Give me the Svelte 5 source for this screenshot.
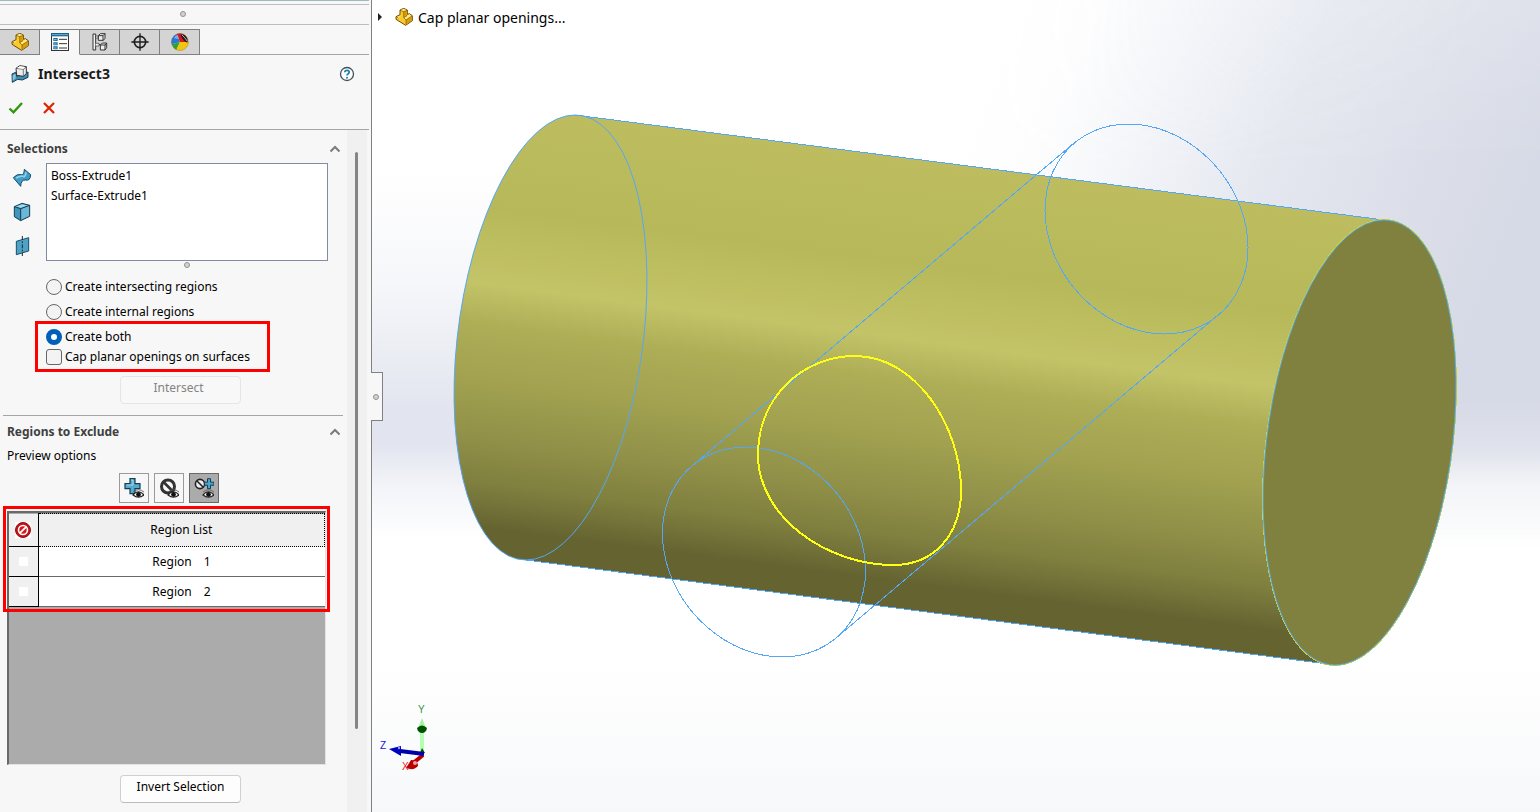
<script>
  const tabs = ['Feature tree', 'Properties', 'Configurations', 'Dimensions', 'Appearance'];
  const modes = ['Create intersecting regions', 'Create internal regions'];
  const regions = [1, 2];
  const previews = ['Show included regions', 'Show excluded regions', 'Show both'];
  let activeTab = $state(1);
  let activePreview = $state(2);
  let mode = $state('Create both');
  let cap = $state(false);
</script>

{#snippet part()}
  <svg class="ic18" viewBox="0 0 54 54" aria-hidden="true">
    <path d="M15 6 26 1 37 6V19L43 17 52 23V38L32 52 3 34V26L15 20Z" fill="#f8cb2a" stroke="#6e4a08" stroke-width="3" stroke-linejoin="round" />
    <path d="M26 11 36 7V23L27 28ZM33 37 51 25V37L33 50Z" fill="#d79c10" />
    <path d="M17 6 26 3 35 6 26 10ZM37 23 43 19 49 23 33 34 28 30ZM6 27 14 23V28L10 30Z" fill="#ffe98c" />
    <path d="M15 7 26 11 37 7M26 11V29L36 23M26 29 33 36 51 24M33 36V50M5 27 10 30" fill="none" stroke="#7c5708" stroke-width="2" />
  </svg>
{/snippet}

{#snippet eye()}
  <path d="M9 17Q14.500 10.500 20 17Q14.500 21.500 9 17Z" fill="#fff" stroke="#222" stroke-width="1.200" />
  <circle cx="14.500" cy="16.500" r="2.400" fill="#111" />
  <path d="M9 14Q14.500 9.500 20 14" fill="none" stroke="#555" stroke-width=".8" />
{/snippet}

{#snippet chevron()}
  <svg class="chev" viewBox="0 0 12 8" aria-hidden="true"><path d="M1.500 6.500 6 2 10.500 6.500" fill="none" stroke="#7b7b7b" stroke-width="2" /></svg>
{/snippet}

<main>
  <aside>
    <div class="topline"></div>
    <div class="grip"><i class="dot"></i></div>
    <nav>
      {#each tabs as name, i}
        <button class="tab" class:on={activeTab === i} aria-label={name} onclick={() => (activeTab = i)}>
          {#if i === 0}
            {@render part()}
          {:else if i === 1}
            <svg class="ic18" viewBox="0 0 54 54"><rect x="1.500" y="1.500" width="51" height="51" fill="#fff" stroke="#333" stroke-width="3" /><rect x="0" y="0" width="54" height="10" fill="#17648c" /><path d="M3 5H51" stroke="#6db4d5" stroke-width="3" /><path d="M7 15h13v9H7zM7 28h13v9H7zM7 40h13v9H7z" fill="#1a6d96" /><path d="M9 20h8M9 33h8M9 45h8" stroke="#8cc8e2" stroke-width="3" /><path d="M24 19H48M24 32H48M24 45H48" stroke="#333" stroke-width="3" /></svg>
          {:else if i === 2}
            <svg class="ic18" viewBox="0 0 54 54"><path d="M6 3h8v48H6zM14 12h10M14 35h15" fill="#f4f4f4" stroke="#333" stroke-width="3" /><path d="M15 9h7v6h-7M14 31h10v8H14" fill="#f4f4f4" stroke="#333" stroke-width="2" /><path d="m22 8 6-6h14v14l-5 6H22zM28 36l6-6h13v14l-5 7H28z" fill="#eee" stroke="#333" stroke-width="3" stroke-linejoin="round" /><path d="M22 8h14v14M36 8l6-6M28 36h14v15M42 36l5-6" fill="none" stroke="#333" stroke-width="3" /></svg>
          {:else if i === 3}
            <svg class="ic18" viewBox="0 0 54 54"><circle cx="27" cy="27" r="17" fill="none" stroke="#1c1c1c" stroke-width="5" /><path d="M27 1V53M1 27H53" stroke="#1c1c1c" stroke-width="4" /></svg>
          {:else}
            <svg class="ic18" viewBox="0 0 54 54"><circle cx="27" cy="27" r="26" fill="#e8dfcf" /><path d="M27 27 17 3A26 26 0 0 0 2 34Z" fill="#2778d4" /><path d="M27 27 17 3Q30-2 42 6L52 27Z" fill="#d81820" /><path d="M27 27 2 34Q6 46 16 51Z" fill="#2fa233" /><path d="M27 27 16 51Q24 55 34 52 51 46 53 27Z" fill="#f2c511" /><path d="M28 5Q44 3 50 18L49 29Q34 22 28 5Z" fill="#211b1b" /><path d="M33 6Q42 14 49 25" stroke="#b9b0ac" stroke-width="3" fill="none" /><path d="M9 16Q13 7 20 6L24 18Z" fill="#98c8fb" opacity=".7" /><circle cx="27" cy="27" r="25.500" fill="none" stroke="#79622e" /></svg>
          {/if}
        </button>
      {/each}
    </nav>
    <header>
      <div class="title">
        <svg class="ic18" viewBox="0 0 54 54" aria-hidden="true"><path d="M3 27 14 22 17 34 51 21V37L34 45 20 43 4 52Z" fill="#3d8db3" stroke="#123f58" stroke-width="3" stroke-linejoin="round" /><path d="M5 31 14 26V40L5 47Z" fill="#8cc4dc" /><path d="M15 10 26 2 46 5V26L37 34 17 31Z" fill="#ececee" stroke="#333" stroke-width="3" stroke-linejoin="round" /><path d="M15 10 37 13V33M37 13 46 6" fill="none" stroke="#444" stroke-width="2" /><path d="M18 9 27 4 42 6 36 11Z" fill="#fff" /></svg>
        <h1>Intersect3</h1>
        <button class="bare" aria-label="Help"><svg width="16" height="16" viewBox="0 0 16 16"><circle cx="8" cy="8" r="6.500" fill="#fff" stroke="#44515a" stroke-width="1.300" /><path d="M5.800 6.200Q5.900 4.300 8 4.300 10.200 4.300 10.200 6.100 10.200 7.200 9 7.900 8 8.500 8 9.600" fill="none" stroke="#1d7eae" stroke-width="1.700" /><circle cx="8" cy="11.700" r="1" fill="#1d7eae" /></svg></button>
      </div>
      <div class="confirm">
        <button class="bare" aria-label="OK"><svg width="16" height="14" viewBox="0 0 16 14"><path d="M1.500 7.500 5.500 11.300 14 2" fill="none" stroke="#34960c" stroke-width="2.400" /></svg></button>
        <button class="bare" aria-label="Cancel"><svg width="14" height="14" viewBox="0 0 14 14"><path d="M2 2 12 12M12 2 2 12" fill="none" stroke="#de2200" stroke-width="2.200" /></svg></button>
      </div>
    </header>
    <div class="body">
      <div class="content">
        <section>
          <div class="head"><h2>Selections</h2><button class="bare" aria-label="Collapse selections">{@render chevron()}</button></div>
          <div class="select">
            <div class="filters">
              <svg width="20" height="20" viewBox="0 0 60 60" aria-hidden="true"><path d="M4 29Q16 16 29 20 36 22 37 4L56 20Q55 40 40 36 27 35 26 55Z" fill="#3e9cc6" stroke="#144b68" stroke-width="3" stroke-linejoin="round" /><path d="M12 30Q28 21 36 26 43 22 41 12" fill="none" stroke="#8fd0ea" stroke-width="5" /></svg>
              <svg width="20" height="20" viewBox="0 0 60 60" aria-hidden="true"><path d="M7 14 30 4 53 10V43L26 56 7 44Z" fill="#3f95bb" stroke="#143f56" stroke-width="3" stroke-linejoin="round" /><path d="M10 14 30 7 49 11 26 18Z" fill="#a2d8ec" /><path d="M27 21 51 12V41L27 53Z" fill="#6cb7d6" /><path d="M7 14 26 20V55M26 20 53 10" fill="none" stroke="#143f56" stroke-width="3" /></svg>
              <svg width="20" height="20" viewBox="0 0 60 60" aria-hidden="true"><path d="M13 16 50 5V45L13 56Z" fill="#4fa2c5" stroke="#17506c" stroke-width="3" /><path d="M31 0V60" stroke="#182a33" stroke-width="3" stroke-dasharray="12 4 5 4" /></svg>
            </div>
            <ul><li>Boss-Extrude1</li><li>Surface-Extrude1</li></ul>
          </div>
          <div class="resize"><i class="dot"></i></div>
          <div class="options">
            {#each modes as m}
              <label><input type="radio" name="mode" value={m} bind:group={mode} />{m}</label>
            {/each}
            <div class="marked">
              <label><input type="radio" name="mode" value="Create both" bind:group={mode} />Create both</label>
              <label><input type="checkbox" bind:checked={cap} />Cap planar openings on surfaces</label>
            </div>
          </div>
          <button class="push" disabled>Intersect</button>
        </section>
        <hr />
        <section>
          <div class="head"><h2>Regions to Exclude</h2><button class="bare" aria-label="Collapse regions">{@render chevron()}</button></div>
          <p>Preview options</p>
          <div class="previews">
            {#each previews as name, i}
              <button class:on={activePreview === i} aria-label={name} onclick={() => (activePreview = i)}>
                <svg width="20" height="20" viewBox="0 0 20 20">
                  {#if i === 0}
                    <path d="M6 .7h5v5h5v5h-5v5H6v-5H1v-5h5z" fill="#56aacd" stroke="#123e57" stroke-width="1.200" />
                    <path d="M7 2h2v5H2.500" fill="none" stroke="#a5d8ec" />
                  {:else if i === 1}
                    <circle cx="9" cy="8.500" r="6.500" fill="none" stroke="#333" stroke-width="3" /><path d="M4.500 4 14 13.500" stroke="#333" stroke-width="2.600" />
                  {:else}
                    <circle cx="6" cy="6" r="4.600" fill="#eee" stroke="#222" stroke-width="1.600" /><path d="M3 3 9 9" stroke="#222" stroke-width="1.600" />
                    <path d="M13.500.7h3v3.500H20v3h-3.500v3.500h-3V7.200H10.500v-3h3z" fill="#4aa5cd" stroke="#123e57" />
                  {/if}
                  {@render eye()}
                </svg>
              </button>
            {/each}
          </div>
          <div class="list">
            <table>
              <thead>
                <tr>
                  <th class="mark"><svg width="16" height="16" viewBox="0 0 16 16" role="img" aria-label="Exclude"><rect width="16" height="16" fill="#fff" /><circle cx="8" cy="8" r="7.500" fill="#c80f14" stroke="#8c1215" /><circle cx="8" cy="8" r="4.500" fill="#d61a1e" stroke="#fff" stroke-width="1.600" /><path d="M4.800 11.200 11.200 4.800" stroke="#fff" stroke-width="1.800" /></svg></th>
                  <th class="name">Region List</th>
                </tr>
              </thead>
              <tbody>
                {#each regions as n}
                  <tr>
                    <td class="mark"><input type="checkbox" aria-label={`Exclude region ${n}`} /></td>
                    <td class="name">Region <span>{n}</span></td>
                  </tr>
                {/each}
              </tbody>
            </table>
          </div>
          <button class="push invert">Invert Selection</button>
        </section>
      </div>
      <div class="scroll"><i></i></div>
    </div>
  </aside>

  <div class="view">
    <svg class="scene" viewBox="372 0 1168 812" preserveAspectRatio="xMidYMid slice" role="img" aria-label="Cylinder model">
      <defs>
        <linearGradient id="side" gradientUnits="userSpaceOnUse" x1="575" y1="115" x2="517" y2="559">
          <stop offset="0" stop-color="#bdbd60" /><stop offset=".1" stop-color="#babb5c" /><stop offset=".23" stop-color="#b7b859" /><stop offset=".31" stop-color="#bdbe5f" /><stop offset=".4" stop-color="#c3c368" /><stop offset=".49" stop-color="#aeae57" /><stop offset=".62" stop-color="#a1a150" /><stop offset=".75" stop-color="#8f8f48" /><stop offset=".84" stop-color="#80803f" /><stop offset=".89" stop-color="#737239" /><stop offset=".94" stop-color="#656330" /><stop offset="1" stop-color="#656330" />
        </linearGradient>
        <linearGradient id="sky" gradientUnits="userSpaceOnUse" x1="990" y1="60" x2="1500" y2="260">
          <stop offset="0" stop-color="#dfe3ee" stop-opacity="0" /><stop offset=".15" stop-color="#dfe3ee" stop-opacity=".08" /><stop offset=".3" stop-color="#dfe3ee" stop-opacity=".35" /><stop offset=".55" stop-color="#dfe3ec" stop-opacity=".85" /><stop offset=".8" stop-color="#dcdfe9" /><stop offset="1" stop-color="#d6dae6" />
        </linearGradient>
        <linearGradient id="fade" x1="0" y1="0" x2="0" y2="1">
          <stop offset="0" stop-color="#fff" stop-opacity=".85" /><stop offset=".3" stop-color="#fff" /><stop offset=".73" stop-color="#fff" /><stop offset=".82" stop-color="#fff" stop-opacity=".75" /><stop offset=".88" stop-color="#fff" stop-opacity=".3" /><stop offset="1" stop-color="#fff" stop-opacity="0" />
        </linearGradient>
        <mask id="horizon"><rect x="900" y="0" width="640" height="550" fill="url(#fade)" /></mask>
        <linearGradient id="west" x1="0" y1="0" x2="0" y2="1">
          <stop offset="0" stop-color="#e2e5ef" stop-opacity="0" /><stop offset=".3" stop-color="#e2e5ef" stop-opacity=".3" /><stop offset=".65" stop-color="#e2e5ef" /><stop offset=".74" stop-color="#e2e5ef" /><stop offset=".86" stop-color="#e2e5ef" stop-opacity=".4" /><stop offset="1" stop-color="#e2e5ef" stop-opacity="0" />
        </linearGradient>
        <linearGradient id="floor" x1="0" y1="0" x2="0" y2="1"><stop offset="0" stop-color="#fff" /><stop offset="1" stop-color="#f7f8fa" /></linearGradient>
      </defs>
      <rect x="372" width="1168" height="812" fill="#fff" />
      <rect x="372" y="660" width="1168" height="152" fill="url(#floor)" />
      <rect x="372" y="170" width="180" height="370" fill="url(#west)" />
      <rect x="900" y="0" width="640" height="550" fill="url(#sky)" mask="url(#horizon)" />
      <path d="M575 115 1384 220 1335 665 526 560A224.100 92.700 -82.400 0 1 575 115Z" fill="url(#side)" />
      <g class="edges">
        <path d="M575 115 1384 220M526 560 1335 665" />
        <circle r="1" transform="matrix(93.300 0 -24.500 222.500 550.500 337.500)" />
        <circle class="rim" r="1" transform="matrix(93.300 0 -24.500 222.500 1359.500 442.500)" />
        <circle class="cap" r="1" transform="matrix(93.300 0 -24.500 222.500 1359.500 442.500)" />
        <circle r="1" transform="matrix(99.900 0 18 105 1146.500 229)" />
        <circle r="1" transform="matrix(99.900 0 18 105 764 552)" />
        <path d="M1074 143 692 466M1218 315 836 638" />
      </g>
      <path d="M855 356C915 356 961 425 961 491 961 536 933 565 893 565 827 565 758 517 758 455 758 397 803 356 855 356Z" fill="none" stroke="#ffff14" stroke-width="2" shape-rendering="crispEdges" />
      <g class="triad">
        <path d="M422 754V731" stroke="#b3ffb3" stroke-width="4" /><path d="M422 718 427 731H417Z" fill="#9df59d" /><path d="M417 728Q422 723 427 728 426 733 422 733T417 728Z" fill="#005200" /><path d="M420 753 422 748 425 753Z" fill="#084908" />
        <path d="M423 755 412 764" stroke="#b80000" stroke-width="4" /><path d="M406 768 411 760Q418 760 418 766Q414 771 406 768Z" fill="#b80000" /><circle cx="415" cy="763" r="2" fill="#f49b9b" />
        <path d="M424 754 400 751" stroke="#0000a8" stroke-width="4" /><path d="M389 749 401 746V756Z" fill="#0000bf" /><circle cx="399" cy="748" r="1.200" fill="#9a9af8" />
        <text x="418" y="713" fill="#389238">Y</text><text x="380" y="749" fill="#1616d8">Z</text><text x="402" y="770" fill="#ed1818">X</text>
      </g>
    </svg>
    <div class="tree">
      <svg width="6" height="8" viewBox="0 0 6 8" aria-hidden="true"><path d="M1 0 5 4 1 8Z" fill="#222" /></svg>
      {@render part()}
      <span>Cap planar openings...</span>
    </div>
    <button class="handle" aria-label="Collapse panel"><i class="dot"></i></button>
  </div>
</main>

<style>
  :global(body) { margin: 0; }
  *, ::before, ::after { box-sizing: border-box; }
  main { display: flex; min-height: 100vh; font: 12px/20px "Noto Sans", "Open Sans", sans-serif; color: #000; background: #f7f7f7; overflow: hidden; }
  svg { display: block; flex: none; }
  h1, h2, p, ul { margin: 0; padding: 0; }
  button { font: inherit; color: inherit; padding: 0; margin: 0; }
  aside { flex: 0 0 372px; display: flex; flex-direction: column; border-right: 1px solid #808080; }
  .topline { height: 5px; margin-right: 2px; border-top: 1px solid #9fb9bd; border-bottom: 1px solid #bdbdbd; }
  .dot { display: block; width: 6px; height: 6px; border-radius: 50%; background: #d2d2d2; border: 1px solid #929292; }
  .grip { height: 20px; margin-right: 2px; padding: 0 3px 2px 0; display: grid; place-items: center; border-bottom: 1px solid #bdbdbd; }
  nav { display: flex; height: 30px; margin-right: 2px; padding-top: 4px; border-bottom: 1px solid #a5a5a5; }
  .tab { width: 40px; height: 26px; display: grid; place-items: center; background: #d4d4d4; border: solid #808080; border-width: 1px 1px 1px 0; }
  .tab.on { background: #f7f7f7; border-bottom-color: #f7f7f7; }
  .ic18 { width: 18px; height: 18px; }
  .bare { background: none; border: 0; display: block; }
  header { height: 75px; margin-right: 2px; padding: 8px 14px 0 11px; border-bottom: 1px solid #a5a5a5; }
  .title { display: flex; align-items: center; gap: 9px; height: 22px; }
  h1 { flex: 1; font-size: 14px; font-weight: 700; color: #1a1a1a; }
  .confirm { display: flex; align-items: center; gap: 18px; height: 45px; margin-left: -3px; }
  .body { flex: 1; display: flex; margin-right: 4px; }
  .content { flex: 1; padding: 9px 4px 9px 3px; }
  .scroll { width: 20px; padding: 22px 0 83px; display: flex; justify-content: center; background: #f0f0f0; }
  .scroll i { width: 3px; background: #858585; border-radius: 2px; margin-right: 2px; }
  section { padding: 0 15px 0 4px; }
  .head { display: flex; align-items: center; justify-content: space-between; height: 20px; margin-right: -13px; }
  h2 { font-size: 12px; font-weight: 700; color: #3f3f3f; }
  .chev { width: 12px; height: 8px; }
  .select { display: flex; margin-top: 4px; }
  .filters { width: 39px; padding: 5px 0 0 5px; display: flex; flex-direction: column; gap: 14px; }
  ul { flex: 1; height: 98px; padding: 2px 4px; list-style: none; background: #fff; border: 1px solid #838aa3; }
  .resize { display: grid; justify-content: center; height: 16px; padding: 1px 0 0 39px; }
  .options { margin-left: 39px; display: flex; flex-direction: column; gap: 5px; }
  label { display: flex; align-items: center; gap: 3px; height: 20px; white-space: nowrap; }
  input { appearance: none; margin: 0; width: 16px; height: 16px; background: #f3f3f3; border: 1px solid #666; border-radius: 3px; flex: none; }
  input[type='radio'] { border-radius: 50%; }
  input[type='radio']:checked { background: #fff; border: 5px solid #005fb8; }
  .marked { position: relative; }
  .marked::after { content: ''; position: absolute; left: -11px; top: -6px; width: 235px; height: 51px; border: 3px solid #f00; pointer-events: none; }
  .push { display: block; width: 121px; height: 28px; margin: 9px 0 11px 113px; padding-bottom: 5px; background: #fdfdfd; border: 1px solid #d0d0d0; border-bottom-color: #bbb; border-radius: 4px; }
  .push:disabled { color: #838383; background: #f8f8f8; border-color: #e5e5e5; padding-right: 4px; }
  .push.invert { margin: 10px 0 0 113px; }
  hr { height: 1px; margin: 0 0 6px; border: 0; background: #a5a5a5; }
  p { margin: 4px 0 7px; }
  .previews { display: flex; gap: 5px; margin-left: 112px; }
  .previews button { width: 30px; height: 30px; display: grid; place-items: center; background: #f7f7f7; border: 1px solid #9b9b9b; }
  .previews .on { background: #ababab; border-color: #696969; }
  .list { position: relative; height: 254px; margin: 8px 2px 0 0; border: 1px solid #696969; border-width: 2px 1px 1px 2px; border-right-color: #e3e3e3; border-bottom-color: #e3e3e3; background: #ababab; }
  .list::after { content: ''; position: absolute; left: -6px; top: -7px; right: -5px; height: 106px; border: 3px solid #f00; pointer-events: none; }
  table { width: 100%; border-collapse: collapse; }
  tr { height: 30px; }
  thead tr { height: 33px; }
  th, td { padding: 0; font-weight: 400; text-align: center; border-bottom: 1px solid #696969; background: #fff; }
  th.name { border: 1px dotted #000; background: #f0f0f0; }
  .mark { width: 29px; background: #f0f0f0; border-right: 1px solid #000; border-bottom: 1px solid #000; }
  .mark svg { margin: 0 auto; }
  .mark input { display: block; margin: 0 auto; width: 9px; height: 9px; border: 0; border-radius: 0; background: #fff; }
  td span { margin-left: 9px; }
  .view { flex: 1; min-width: 0; display: grid; position: relative; }
  .scene { grid-area: 1 / 1; width: 100%; height: 100%; }
  .edges { fill: none; stroke: #55a7f5; shape-rendering: crispEdges; }
  .edges circle { vector-effect: non-scaling-stroke; }
  .edges .rim { stroke: #d4d82c; stroke-width: 2; }
  .edges .cap { fill: #80803f; }
  .triad text { font: 10px "Liberation Sans", sans-serif; }
  .tree { grid-area: 1 / 1; align-self: start; display: flex; align-items: center; gap: 5px; padding: 6px 5px; font: 14px/20px "Noto Sans", sans-serif; }
  .tree > svg:first-child { margin-right: 7px; }
  .tree span { padding-top: 2px; }
  .handle { position: absolute; left: -1px; top: 372px; width: 12px; height: 49px; display: grid; place-items: center start; padding-left: 2px; background: #f7f7f7; border: 1px solid #808080; border-left: 0; }
</style>
